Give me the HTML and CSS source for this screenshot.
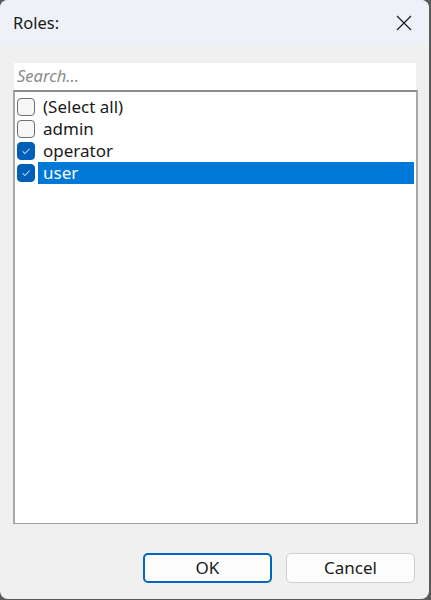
FILE: index.html
```html
<!DOCTYPE html>
<html>
<head>
<meta charset="utf-8">
<link rel="stylesheet" href="styles.css">
</head>
<body>
<div class="window">
  <div class="titlebar">
    <span class="title">Roles:</span>
    <svg class="close" width="16" height="16" viewBox="0 0 16 16"><path d="M1 1 L15 15 M15 1 L1 15" stroke="#1a1a1a" stroke-width="1.2" fill="none"/></svg>
  </div>
  <div class="content">
    <div class="search">Search...</div>
    <div class="list">
      <div class="row"><span class="box"></span><span class="label">(Select all)</span></div>
      <div class="row"><span class="box"></span><span class="label">admin</span></div>
      <div class="row"><span class="box checked"><svg width="12" height="12" viewBox="0 0 12 12"><path d="M2.5 6.2 L5 8.6 L9.6 3.6" stroke="#fff" stroke-width="1" fill="none"/></svg></span><span class="label">operator</span></div>
      <div class="row selected"><span class="box checked"><svg width="12" height="12" viewBox="0 0 12 12"><path d="M2.5 6.2 L5 8.6 L9.6 3.6" stroke="#fff" stroke-width="1" fill="none"/></svg></span><span class="label">user</span></div>
    </div>
    <div class="footer">
      <button class="btn primary">OK</button>
      <button class="btn">Cancel</button>
    </div>
  </div>
</div>
</body>
</html>
```
FILE: styles.css
```css
* { box-sizing: border-box; }
html, body { margin: 0; padding: 0; }
body {
  background: #5a5a5a;
  width: 431px;
  height: 600px;
  font-family: "Noto Sans", "Open Sans", sans-serif;
  color: #1a1a1a;
}
.window {
  width: 429px;
  height: 599px;
  border-radius: 8px;
  overflow: hidden;
  background: #f0f0f0;
  display: flex;
  flex-direction: column;
}
.titlebar {
  height: 46px;
  background: #eef2f8;
  display: flex;
  align-items: center;
  justify-content: space-between;
  padding: 0 17px 0 13px;
}
.title {
  font-size: 16.5px;
  color: #1a1a1a;
  margin-top: -2px;
}
.close { display: block; margin-top: -1px; }
.content {
  flex: 1;
  display: flex;
  flex-direction: column;
  padding: 17px 11px 0 13px;
}
.search {
  height: 27px;
  margin: 0 2px 0 1px;
  background: #fff;
  font-style: italic;
  font-size: 16.5px;
  line-height: 24px;
  color: #8a8a8a;
  padding: 1px 0 0 3px;
}
.list {
  height: 434px;
  background: #fff;
  border: 1px solid #a0a0a0;
  border-top: 2px solid #8c8c8c;
  border-left: 2px solid #a8a8a8;
  border-right: 2px solid #a8a8a8;
  padding: 4px 2px 0 2px;
}
.row {
  height: 22px;
  display: flex;
  align-items: center;
  padding-left: 0;
}
.box {
  width: 18px;
  height: 18px;
  border: 1px solid #6f6f6f;
  border-radius: 4px;
  background: #f7f7f7;
  display: flex;
  align-items: center;
  justify-content: center;
  flex: none;
}
.box.checked {
  background: #005fb8;
  border-color: #005fb8;
}
.box svg { display: block; }
.label {
  flex: 1;
  height: 22px;
  margin-left: 3px;
  padding-left: 5px;
  font-size: 17px;
  line-height: 21px;
  color: #1a1a1a;
}
.selected .label {
  background: #0078d7;
  color: #fff;
}
.footer {
  display: flex;
  justify-content: flex-end;
  gap: 14px;
  padding: 29px 3px 0 0;
}
.btn {
  width: 129px;
  height: 30px;
  font-family: "Noto Sans", "Open Sans", sans-serif;
  font-size: 17px;
  line-height: 26px;
  color: #1a1a1a;
  background: #fdfdfd;
  border: 1px solid #d0d0d0;
  border-radius: 5px;
  padding: 0;
}
.btn.primary {
  border: 2px solid #0067c0;
}
```
